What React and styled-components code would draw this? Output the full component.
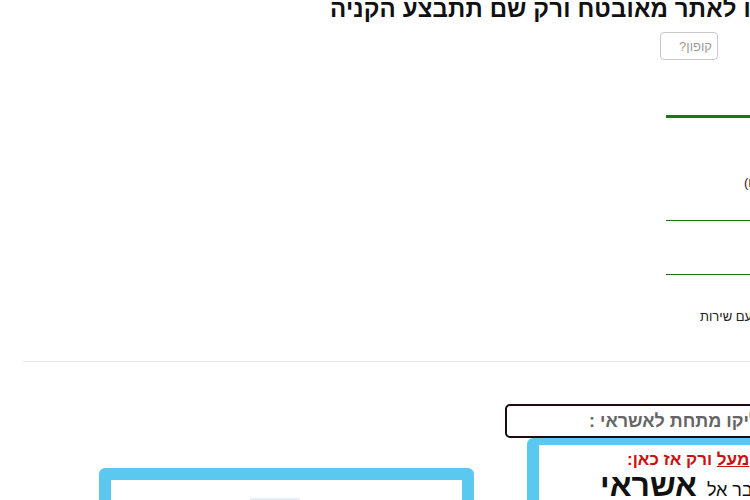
import React from "react";
import styled, { createGlobalStyle } from "styled-components";

const Global = createGlobalStyle`
  html, body { margin: 0; padding: 0; background: #fff; overflow: hidden; }
`;

const Page = styled.div`
  width: 750px;
  height: 500px;
  overflow: hidden;
  display: flex;
  flex-direction: column;
  align-items: flex-start;
  font-family: "Liberation Sans", Arial, sans-serif;
  color: #111;
  & > * { flex-shrink: 0; }
`;

const Heading = styled.h1`
  margin: -5px 0 0 330px;
  font-size: 24px;
  font-weight: bold;
  line-height: 28px;
  letter-spacing: 0.15px;
  direction: rtl;
  white-space: nowrap;
  width: max-content;
  color: #111;
`;

const Coupon = styled.input`
  box-sizing: border-box;
  width: 58px;
  height: 28px;
  margin: 9px 0 0 660px;
  border: 1px solid #c9c9c9;
  border-radius: 4px;
  direction: rtl;
  padding: 0 5px;
  font-family: "Liberation Sans", Arial, sans-serif;
  font-size: 13px;
  color: #333;
  background: #fff;
  &::placeholder { color: #9a9a9a; }
`;

const GreenRule = styled.div`
  width: 120px;
  height: ${(p) => (p.$thick ? "3px" : "1px")};
  background: #18790c;
  margin: ${(p) => p.$top}px 0 0 666px;
`;

const SmallText = styled.div`
  margin: ${(p) => p.$top}px 0 0 ${(p) => p.$left}px;
  font-size: 13px;
  line-height: 16px;
  direction: rtl;
  white-space: nowrap;
  width: max-content;
  color: #222;
`;

const Divider = styled.div`
  margin: 36px 0 0 23px;
  width: 760px;
  height: 1px;
  background: #e3e3e3;
`;

const BottomRow = styled.div`
  display: flex;
  align-items: flex-start;
  margin: 42px 0 0 99px;
  & > * { flex-shrink: 0; }
`;

const LeftFrame = styled.div`
  box-sizing: border-box;
  width: 375px;
  height: 120px;
  margin-top: 64px;
  border: 12px solid #5bc8f0;
  border-radius: 6px;
  display: flex;
  flex-direction: column;
  align-items: flex-start;
`;

const FaintBar = styled.div`
  width: 50px;
  height: 3px;
  margin: 18px 0 0 139px;
  background: #e6edf6;
  border-radius: 2px;
  flex-shrink: 0;
`;

const RightColumn = styled.div`
  margin-left: 31px;
  display: flex;
  flex-direction: column;
  align-items: flex-start;
  & > * { flex-shrink: 0; }
`;

const NoticeBox = styled.div`
  box-sizing: border-box;
  height: 34px;
  padding: 0 30px 0 82px;
  border: 2px solid #1d0b0b;
  border-radius: 5px;
  display: flex;
  align-items: center;
  direction: rtl;
  white-space: nowrap;
  font-size: 18px;
  font-weight: bold;
  color: #666;
  width: max-content;
`;

const BlueFrame = styled.div`
  box-sizing: border-box;
  width: 320px;
  height: 110px;
  margin-left: 22px;
  border: 12px solid #5bc8f0;
  border-top-width: 7px;
  border-radius: 6px;
  display: flex;
  flex-direction: column;
  align-items: flex-start;
  & > * { flex-shrink: 0; }
`;

const RedLine = styled.div`
  margin: 5px 0 0 ${(p) => p.$left}px;
  font-size: 17px;
  font-weight: bold;
  line-height: 20px;
  color: #cc1111;
  direction: rtl;
  white-space: nowrap;
  width: max-content;
  u { text-decoration: underline; }
`;

const BigLine = styled.div`
  margin: 0 0 0 ${(p) => p.$left}px;
  direction: rtl;
  white-space: nowrap;
  width: max-content;
  color: #111;
  line-height: 30px;
  display: flex;
  align-items: baseline;
  gap: 10px;
`;

const Small = styled.span`
  font-size: 18px;
  line-height: 30px;
`;

const Large = styled.span`
  font-size: 32px;
  line-height: 30px;
  font-weight: bold;
`;

export default function App() {
  return (
    <>
      <Global />
      <Page>
        <Heading>לאחר לחיצה תועברו לאתר מאובטח ורק שם תתבצע הקניה</Heading>
        <Coupon placeholder="קופון?" />
        <GreenRule $thick $top={55} />
        <SmallText $top={57} $left={744}>משלוח (חינם)</SmallText>
        <GreenRule $top={29} />
        <GreenRule $top={53} />
        <SmallText $top={34} $left={700}>משלוח עם שירות</SmallText>
        <Divider />
        <BottomRow>
          <LeftFrame>
            <FaintBar />
          </LeftFrame>
          <RightColumn>
            <NoticeBox>לתשלום הקליקו מתחת לאשראי :</NoticeBox>
            <BlueFrame>
              <RedLine $left={88}>מלאו פרטים <u>מעל</u> ורק אז כאן:</RedLine>
              <BigLine $left={61}>
                <Small>מעבר אל</Small>
                <Large>אשראי</Large>
              </BigLine>
            </BlueFrame>
          </RightColumn>
        </BottomRow>
      </Page>
    </>
  );
}
